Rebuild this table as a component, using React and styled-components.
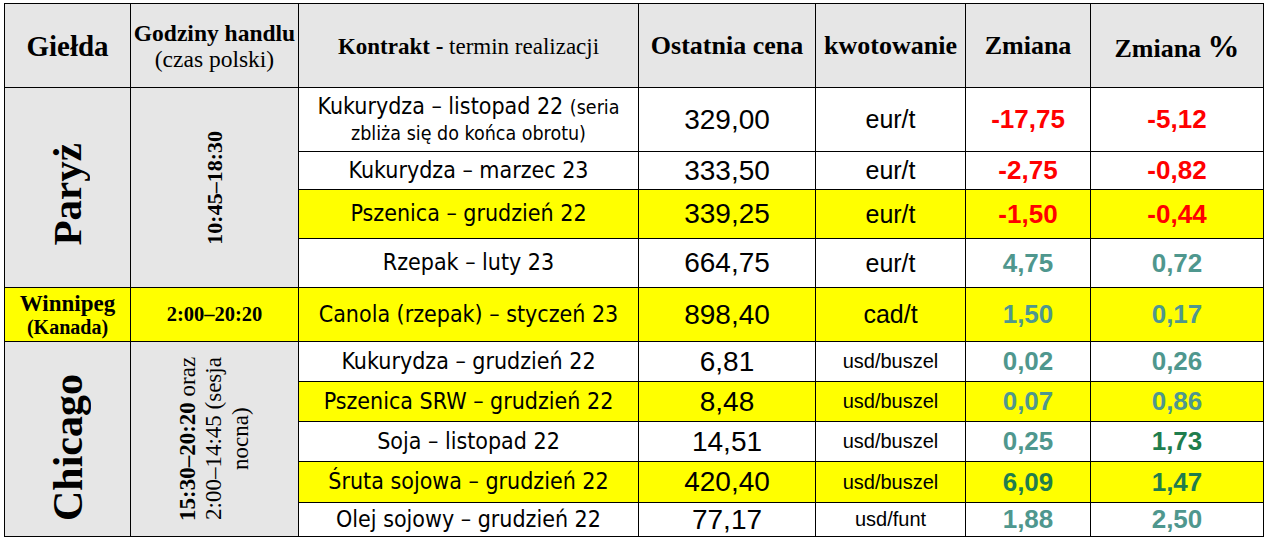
import React from 'react'
import styled, { createGlobalStyle } from 'styled-components'

const GlobalStyle = createGlobalStyle`
  html, body { margin: 0; padding: 0; background: #fff; }
`

const SERIF = `"Liberation Serif", "Times New Roman", serif`
const SANS = `"DejaVu Sans Condensed", "DejaVu Sans", sans-serif`
const NARROW = `"Liberation Sans Narrow", "Arial Narrow", "Liberation Sans", sans-serif`

const GRAY = '#e6e6e6'
const YELLOW = '#ffff00'
const TONES = { neg: '#ff0000', pos: '#4f978e', up: '#1f7d4d' }

const COLS = [126, 168, 340, 177, 150, 125, 173]

const Page = styled.div`
  padding: 3px 0 0 4px;
`

const Table = styled.table`
  border-collapse: collapse;
  table-layout: fixed;
  width: 1260px;
`

const ColW = styled.col`
  width: ${p => p.$w}px;
`

const Row = styled.tr`
  height: ${p => p.$h}px;
`

const Head = styled.th`
  border: 1px solid #000;
  background: ${GRAY};
  padding: 2px 0 0;
  font-family: ${SERIF};
  font-size: ${p => p.$size || 26}px;
  font-weight: 700;
  line-height: 1.1;
  color: #000;
  text-align: center;
  vertical-align: middle;
`

const Light = styled.span`
  font-weight: 400;
`

const Pct = styled.span`
  font-size: 32px;
`

const Cell = styled.td`
  border: 1px solid #000;
  background: ${p => p.$bg || '#fff'};
  padding: 0;
  text-align: center;
  vertical-align: middle;
  color: #000;
`

const Exchange = styled(Cell)`
  font-family: ${SERIF};
  font-weight: 700;
  font-size: ${p => p.$size || 20}px;
  line-height: 1.1;
`

const Line = styled.div`
  font-size: ${p => p.$size}px;
`

// rotated text, read bottom to top; $shift nudges it down
const Vertical = styled.div`
  writing-mode: vertical-rl;
  transform: rotate(180deg);
  margin: ${p => p.$shift || 0}px auto 0;
  font-family: ${SERIF};
  font-size: ${p => p.$size}px;
  font-weight: ${p => (p.$light ? 400 : 700)};
  line-height: ${p => p.$lh || 1};
  text-align: center;
  ${p => p.$wrap && `height: ${p.$wrap}px;`}
`

const Bold = styled.b`
  font-weight: 700;
`

const Contract = styled(Cell)`
  font-family: ${SANS};
  font-size: 23px;
  line-height: 1.12;
`

const Note = styled.span`
  font-size: 19.5px;
`

const Price = styled(Cell)`
  font-family: ${NARROW};
  font-size: 28px;
`

const Unit = styled(Cell)`
  font-family: ${NARROW};
  font-size: ${p => (p.$small ? 20 : 25)}px;
`

const Change = styled(Cell)`
  font-family: ${NARROW};
  font-size: 26px;
  font-weight: 700;
  color: ${p => TONES[p.$tone]};
`

const rows = [
  {
    h: 64,
    contract: (
      <>
        Kukurydza – listopad 22 <Note>(seria</Note>
        <br />
        <Note>zbliża się do końca obrotu)</Note>
      </>
    ),
    price: '329,00', unit: 'eur/t', change: ['-17,75', 'neg'], pct: ['-5,12', 'neg']
  },
  { h: 38, contract: 'Kukurydza – marzec 23', price: '333,50', unit: 'eur/t', change: ['-2,75', 'neg'], pct: ['-0,82', 'neg'] },
  { h: 49, hl: true, contract: 'Pszenica – grudzień 22', price: '339,25', unit: 'eur/t', change: ['-1,50', 'neg'], pct: ['-0,44', 'neg'] },
  { h: 49, contract: 'Rzepak – luty 23', price: '664,75', unit: 'eur/t', change: ['4,75', 'pos'], pct: ['0,72', 'pos'] },
  { h: 54, hl: true, contract: 'Canola (rzepak) – styczeń 23', price: '898,40', unit: 'cad/t', change: ['1,50', 'pos'], pct: ['0,17', 'pos'] },
  { h: 40, contract: 'Kukurydza – grudzień 22', price: '6,81', unit: 'usd/buszel', small: true, change: ['0,02', 'pos'], pct: ['0,26', 'pos'] },
  { h: 40, hl: true, contract: 'Pszenica SRW – grudzień 22', price: '8,48', unit: 'usd/buszel', small: true, change: ['0,07', 'pos'], pct: ['0,86', 'pos'] },
  { h: 40, contract: 'Soja – listopad 22', price: '14,51', unit: 'usd/buszel', small: true, change: ['0,25', 'pos'], pct: ['1,73', 'up'] },
  { h: 41, hl: true, contract: 'Śruta sojowa – grudzień 22', price: '420,40', unit: 'usd/buszel', small: true, change: ['6,09', 'up'], pct: ['1,47', 'up'] },
  { h: 34, contract: 'Olej sojowy – grudzień 22', price: '77,17', unit: 'usd/funt', small: true, change: ['1,88', 'pos'], pct: ['2,50', 'pos'] }
]

function leadCells(i) {
  switch (i) {
    case 0:
      return (
        <>
          <Exchange rowSpan={4} $bg={GRAY}>
            <Vertical $size={41} $shift={14}>Paryż</Vertical>
          </Exchange>
          <Exchange rowSpan={4} $bg={GRAY}>
            <Vertical $size={22}>10:45–18:30</Vertical>
          </Exchange>
        </>
      )
    case 4:
      return (
        <>
          <Exchange $bg={YELLOW}>
            <Line $size={23}>Winnipeg</Line>
            <Line $size={20}>(Kanada)</Line>
          </Exchange>
          <Exchange $bg={YELLOW} $size={20.5}>
            2:00–20:20
          </Exchange>
        </>
      )
    case 5:
      return (
        <>
          <Exchange rowSpan={5} $bg={GRAY}>
            <Vertical $size={42} $shift={16}>Chicago</Vertical>
          </Exchange>
          <Exchange rowSpan={5} $bg={GRAY}>
            <Vertical $size={23} $light $lh={1.15} $wrap={176}>
              <Bold>15:30–20:20</Bold> oraz 2:00–14:45 (sesja nocna)
            </Vertical>
          </Exchange>
        </>
      )
    default:
      return null
  }
}

export default function App() {
  return (
    <Page>
      <GlobalStyle />
      <Table>
        <colgroup>
          {COLS.map((w, i) => (
            <ColW key={i} $w={w} />
          ))}
        </colgroup>
        <thead>
          <Row $h={84}>
            <Head $size={29}>Giełda</Head>
            <Head $size={23.5}>
              Godziny handlu
              <br />
              <Light>(czas polski)</Light>
            </Head>
            <Head $size={23}>
              Kontrakt - <Light>termin realizacji</Light>
            </Head>
            <Head>Ostatnia cena</Head>
            <Head>kwotowanie</Head>
            <Head>Zmiana</Head>
            <Head>
              Zmiana <Pct>%</Pct>
            </Head>
          </Row>
        </thead>
        <tbody>
          {rows.map((r, i) => {
            const bg = r.hl ? YELLOW : '#fff'
            return (
              <Row key={i} $h={r.h}>
                {leadCells(i)}
                <Contract $bg={bg}>{r.contract}</Contract>
                <Price $bg={bg}>{r.price}</Price>
                <Unit $bg={bg} $small={r.small}>{r.unit}</Unit>
                <Change $bg={bg} $tone={r.change[1]}>{r.change[0]}</Change>
                <Change $bg={bg} $tone={r.pct[1]}>{r.pct[0]}</Change>
              </Row>
            )
          })}
        </tbody>
      </Table>
    </Page>
  )
}
